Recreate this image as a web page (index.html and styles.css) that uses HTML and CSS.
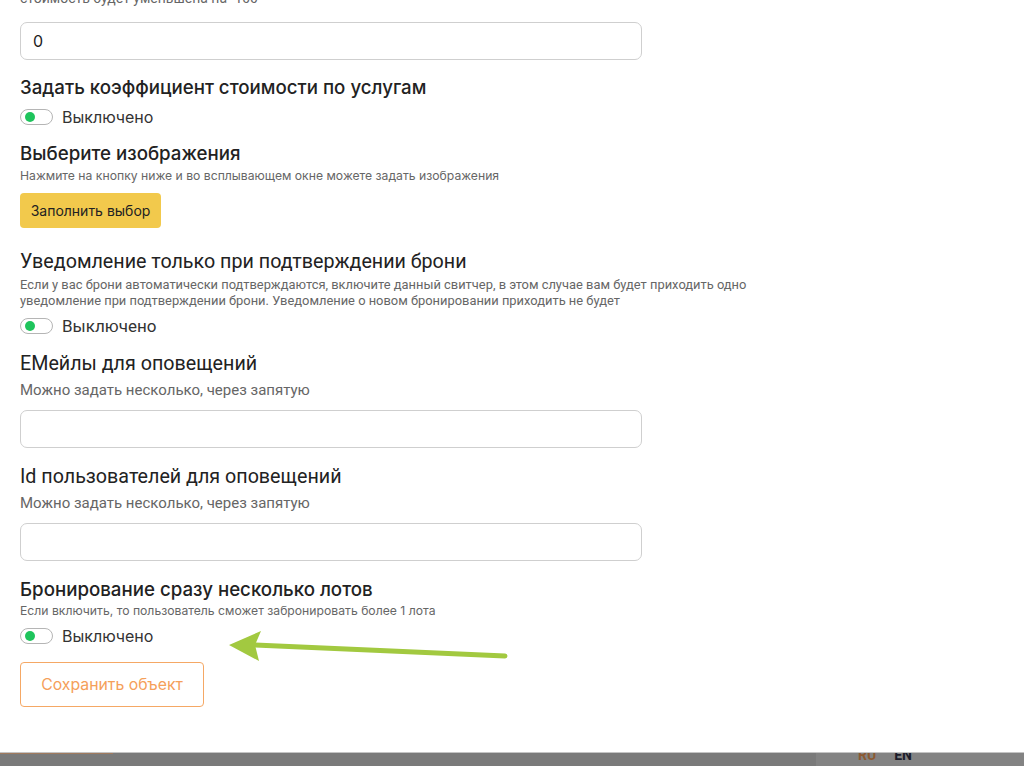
FILE: index.html
```
<!DOCTYPE html>
<html>
    <head>
        <meta http-equiv="Content-Type" content="text/html; charset=utf-8" />
        <title>Редактирование объекта</title>
        <link rel="stylesheet" href="styles.css">
    </head>
    <body>
        <div class="form">
            <p class="hint top">стоимость будет уменьшена на -100</p>
            <input type="text" class="input first" value="0"/>

            <h3 class="title">Задать коэффициент стоимости по услугам</h3>
            <div class="switch-row">
                <span class="switch"><span class="knob"></span></span>
                <span class="switch-label">Выключено</span>
            </div>

            <h3 class="title">Выберите изображения</h3>
            <p class="hint small">Нажмите на кнопку ниже и во всплывающем окне можете задать изображения</p>
            <button type="button" class="btn-yellow">Заполнить выбор</button>

            <h3 class="title narrow gap-l">Уведомление только при подтверждении брони</h3>
            <p class="hint small narrow">Если у вас брони автоматически подтверждаются, включите данный свитчер, в этом случае вам будет приходить одно<br/>уведомление при подтверждении брони. Уведомление о новом бронировании приходить не будет</p>
            <div class="switch-row">
                <span class="switch"><span class="knob"></span></span>
                <span class="switch-label narrow">Выключено</span>
            </div>

            <h3 class="title narrow gap-m">ЕМейлы для оповещений</h3>
            <p class="hint mid narrow">Можно задать несколько, через запятую</p>
            <input type="text" class="input"/>

            <h3 class="title narrow gap-m">Id пользователей для оповещений</h3>
            <p class="hint mid narrow">Можно задать несколько, через запятую</p>
            <input type="text" class="input"/>

            <h3 class="title gap-m">Бронирование сразу несколько лотов</h3>
            <p class="hint small tight">Если включить, то пользователь сможет забронировать более 1 лота</p>
            <div class="switch-row">
                <span class="switch"><span class="knob"></span></span>
                <span class="switch-label">Выключено</span>
            </div>

            <button type="button" class="btn-save">Сохранить объект</button>
        </div>

        <svg class="arrow" width="290" height="45" viewBox="0 0 290 45">
            <line x1="280" y1="30" x2="30" y2="19" stroke="#a2c940" stroke-width="5" stroke-linecap="round"/>
            <polygon points="4,19 36,5 30,19 34,35" fill="#a2c940"/>
        </svg>

        <div class="footer">
            <div class="footer-left"></div>
            <div class="footer-mid"></div>
            <div class="footer-right">
                <span class="lang ru">RU</span>
                <span class="lang en">EN</span>
            </div>
        </div>
    </body>
</html>
```

FILE: styles.css
```
body {
    margin:         0;
    background:     #ffffff;
    font-family:    Inter, "Noto Sans", sans-serif;
    color:          #222222;
    overflow:       hidden;
}
.form {
    padding:        0 0 0 20px;
    margin-top:     -10px;
    width:          780px;
}
.narrow {
    font-family:    Roboto, "Liberation Sans", sans-serif;
}
.hint {
    margin:         0;
    color:          #666666;
}
.hint.top {
    font-size:      14px;
    line-height:    16px;
    font-family:    Roboto, sans-serif;
}
.hint.small {
    font-size:      12.2px;
    line-height:    16px;
    margin-top:     2px;
}
.hint.small.narrow {
    font-size:      12.9px;
    margin-top:     3px;
}
.hint.small.tight {
    margin-top:     1px;
}
.hint.mid {
    font-size:      15px;
    line-height:    20px;
    margin-top:     4px;
}
.input {
    display:        block;
    box-sizing:     border-box;
    width:          622px;
    height:         38px;
    margin:         10px 0 0 0;
    padding:        0 12px;
    border:         1px solid #cfcfcf;
    border-radius:  7px;
    font-size:      16px;
    font-family:    Inter, sans-serif;
    color:          #222222;
    outline:        none;
}
.input.first {
    margin-top:     16px;
}
.title {
    margin:         16px 0 0 0;
    font-size:      18.7px;
    line-height:    24px;
    font-weight:    500;
    color:          #222222;
}
.title.narrow {
    font-size:      19.7px;
    font-weight:    400;
}
.title.gap-l {
    margin-top:     22px;
}
.title.gap-m {
    margin-top:     17px;
}
.switch-row {
    display:        flex;
    align-items:    center;
    gap:            9px;
    margin-top:     8px;
    height:         18px;
}
.switch {
    display:        flex;
    align-items:    center;
    box-sizing:     border-box;
    width:          33px;
    height:         16px;
    border:         1px solid #b5b5b5;
    border-radius:  8px;
    padding-left:   4px;
    background:     #ffffff;
}
.knob {
    width:          10px;
    height:         10px;
    border-radius:  50%;
    background:     #1ec45c;
}
.switch-label {
    font-size:      16px;
    color:          #333333;
}
.switch-label.narrow {
    font-size:      17px;
}
.btn-yellow {
    display:        block;
    margin-top:     9px;
    height:         35px;
    width:          141px;
    border:         none;
    border-radius:  4px;
    background:     #f2c94c;
    color:          #222222;
    font-family:    Inter, sans-serif;
    font-size:      14px;
    padding:        0;
}
.btn-save {
    display:        block;
    margin-top:     17px;
    width:          184px;
    height:         45px;
    background:     #ffffff;
    border:         1px solid #f5a865;
    border-radius:  4px;
    color:          #f5a05a;
    font-family:    Inter, sans-serif;
    font-size:      15.8px;
    padding:        0;
}
.arrow {
    position:       absolute;
    left:           225px;
    top:            626px;
}
.footer {
    position:       absolute;
    left:           0;
    right:          0;
    bottom:         0;
    height:         13px;
    display:        flex;
    background:     #7a7a7a;
    border-top:     1px solid #c4c4c4;
    overflow:       hidden;
}
.footer-left {
    width:          113px;
    border-top:     2px solid #a07a5e;
    margin-top:     -1px;
}
.footer-mid {
    flex:           1;
}
.footer-right {
    box-sizing:     border-box;
    width:          208px;
    background:     #838383;
    display:        flex;
    gap:            18px;
    padding-left:   42px;
}
.lang {
    font-family:    Roboto, sans-serif;
    font-weight:    700;
    font-size:      14px;
    line-height:    14px;
    margin-top:     -5px;
}
.lang.ru {
    color:          #8c5a32;
}
.lang.en {
    color:          #1c1c2a;
}
```
